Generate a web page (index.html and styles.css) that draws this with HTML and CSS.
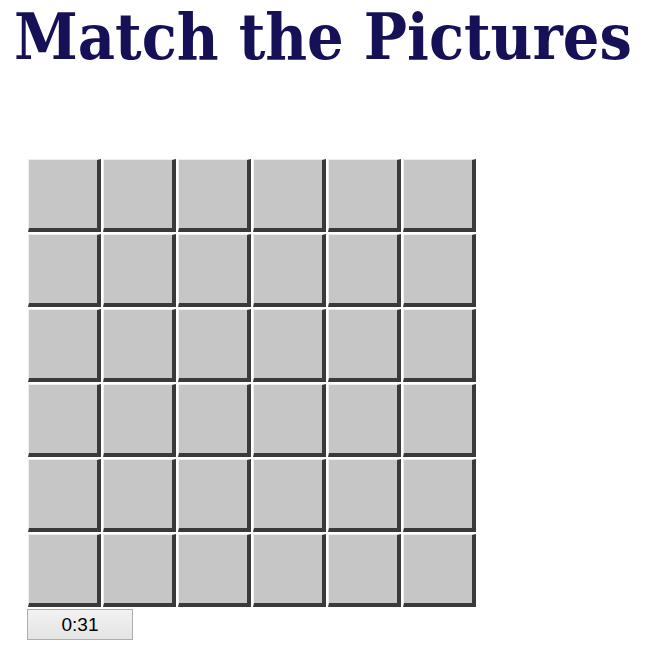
FILE: index.html
```html
<!DOCTYPE html>
<html>
<head>
<meta charset="utf-8">
<link rel="stylesheet" href="styles.css">
</head>
<body>
<h1 class="title">Match the Pictures</h1>
<div class="board">
  <div class="tile"></div><div class="tile"></div><div class="tile"></div><div class="tile"></div><div class="tile"></div><div class="tile"></div>
  <div class="tile"></div><div class="tile"></div><div class="tile"></div><div class="tile"></div><div class="tile"></div><div class="tile"></div>
  <div class="tile"></div><div class="tile"></div><div class="tile"></div><div class="tile"></div><div class="tile"></div><div class="tile"></div>
  <div class="tile"></div><div class="tile"></div><div class="tile"></div><div class="tile"></div><div class="tile"></div><div class="tile"></div>
  <div class="tile"></div><div class="tile"></div><div class="tile"></div><div class="tile"></div><div class="tile"></div><div class="tile"></div>
  <div class="tile"></div><div class="tile"></div><div class="tile"></div><div class="tile"></div><div class="tile"></div><div class="tile"></div>
</div>
<button class="timer">0:31</button>
</body>
</html>
```

FILE: styles.css
```css
html, body {
  margin: 0;
  padding: 0;
  background: #ffffff;
}
body {
  padding: 0 0 0 8px;
}
.title {
  margin: 0;
  padding: 0 0 0 6px;
  font-family: "DejaVu Serif Condensed", "DejaVu Serif", serif;
  font-weight: bold;
  font-size: 64px;
  line-height: 74px;
  white-space: nowrap;
  color: #161157;
}
.board {
  margin: 85px 0 0 20px;
  display: grid;
  grid-template-columns: repeat(6, 73px);
  grid-auto-rows: 73px;
  gap: 2px;
  width: max-content;
}
.tile {
  box-sizing: border-box;
  background: #c6c6c6;
  border-style: solid;
  border-width: 1px 4px 4px 1px;
  border-color: #efefef #3a3a3a #3a3a3a #efefef;
}
.timer {
  display: block;
  margin: 2px 0 0 19px;
  width: 106px;
  height: 31px;
  padding: 0;
  font-family: "Liberation Sans", Arial, sans-serif;
  font-size: 19px;
  line-height: 29px;
  color: #000;
  background: linear-gradient(#f2f2f2, #e4e4e4);
  border: 1px solid #adadad;
  border-radius: 0;
}
```
